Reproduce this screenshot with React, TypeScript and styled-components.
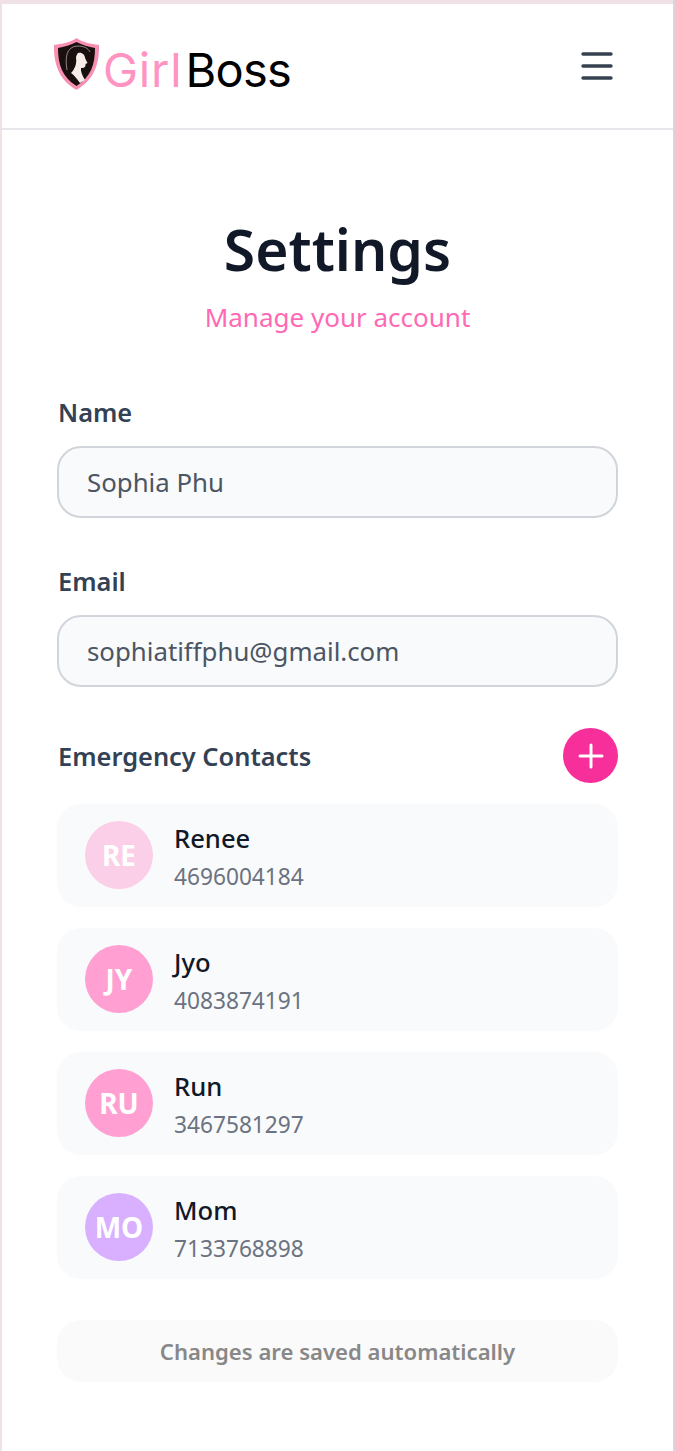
import React from "react";
import styled, { createGlobalStyle } from "styled-components";

const Global = createGlobalStyle`
  html, body { margin: 0; padding: 0; background: #f0e1e7; }
  body { font-family: "Noto Sans", "Open Sans", sans-serif; }
  * { box-sizing: border-box; }
`;

const Page = styled.div`
  width: 675px;
  height: 1451px;
  overflow: hidden;
  padding: 4px 0 0 2px;
  border-right: 2px solid #ddd4d9;
`;

const Phone = styled.div`
  background: #fff;
  height: 1447px;
`;

const Header = styled.header`
  height: 126px;
  border-bottom: 2px solid #e5e7eb;
  display: flex;
  align-items: center;
  justify-content: space-between;
  padding: 0 59px 0 52px;
`;

const Logo = styled.div`
  display: flex;
  align-items: center;
  gap: 0;
  margin-top: 2px;
`;

const ShieldMark = styled.svg`
  display: block;
  margin-bottom: 6px;
`;

const LogoText = styled.div`
  font-family: "Inter", sans-serif;
  font-size: 47px;
  line-height: 52px;
  letter-spacing: -0.7px;
  color: #000;
  margin-top: 5px;
  margin-left: 3px;
`;

const Pink = styled.span`
  color: #ff94c2;
  letter-spacing: 0.8px;
  margin-right: 3px;
`;

const Menu = styled.button`
  border: 0;
  background: none;
  padding: 0;
  width: 34px;
  height: 34px;
  color: #374151;
`;

const Main = styled.main`
  padding: 0 55px;
`;

const Title = styled.h1`
  margin: 83px 0 0;
  text-align: center;
  font-size: 57px;
  line-height: 72px;
  font-weight: 600;
  color: #111827;
`;

const Subtitle = styled.p`
  margin: 13px 0 0;
  text-align: center;
  font-size: 26px;
  line-height: 38px;
  color: #ff69b4;
`;

const Field = styled.div<{ $top: number }>`
  margin-top: ${(p) => p.$top}px;
`;

const Label = styled.label`
  display: block;
  font-size: 25.400px;
  line-height: 34px;
  font-weight: 600;
  color: #334155;
  margin-bottom: 17px;
  margin-left: 1px;
`;

const Input = styled.div`
  height: 72px;
  border: 2px solid #d1d5db;
  border-radius: 24px;
  background: #f9fafb;
  padding: 0 28px;
  display: flex;
  align-items: center;
  font-size: 25.800px;
  color: #4b5563;
`;

const ContactsHead = styled.div`
  margin-top: 41px;
  display: flex;
  align-items: center;
  justify-content: space-between;
`;

const ContactsTitle = styled.h2`
  margin: 0 0 0 1px;
  font-size: 25.400px;
  line-height: 34px;
  font-weight: 600;
  color: #334155;
`;

const AddButton = styled.button`
  width: 55px;
  height: 55px;
  border: 0;
  padding: 0;
  border-radius: 50%;
  background: #f72f9b;
  color: #fff;
  display: flex;
  align-items: center;
  justify-content: center;
`;

const List = styled.div`
  margin-top: 21px;
  display: flex;
  flex-direction: column;
  gap: 21px;
`;

const Card = styled.div`
  height: 103px;
  border-radius: 24px;
  background: #f9fafb;
  display: flex;
  align-items: center;
  gap: 21px;
  padding: 0 28px;
`;

const Avatar = styled.div<{ $bg: string }>`
  width: 68px;
  height: 68px;
  margin-bottom: 1px;
  border-radius: 50%;
  background: ${(p) => p.$bg};
  color: #fff;
  font-size: 28px;
  font-weight: 700;
  display: flex;
  align-items: center;
  justify-content: center;
`;

const Info = styled.div`
  display: flex;
  flex-direction: column;
  padding-top: 3px;
`;

const ContactName = styled.div`
  font-size: 25.600px;
  line-height: 38px;
  font-weight: 500;
  color: #111827;
`;

const ContactPhone = styled.div`
  font-size: 22.700px;
  line-height: 37px;
  color: #6b7280;
`;

const Note = styled.div`
  margin-top: 41px;
  height: 62px;
  border-radius: 24px;
  background: #fafafa;
  display: flex;
  align-items: center;
  justify-content: center;
  font-size: 22.100px;
  font-weight: 600;
  color: #888888;
`;

const contacts = [
  { i: "RE", n: "Renee", p: "4696004184", c: "#fbcfe8" },
  { i: "JY", n: "Jyo", p: "4083874191", c: "#ff9fd2" },
  { i: "RU", n: "Run", p: "3467581297", c: "#ff9fd2" },
  { i: "MO", n: "Mom", p: "7133768898", c: "#d8b0ff" },
];

const Shield = () => (
  <ShieldMark width="46" height="52" viewBox="0 0 46 52">
    <path d="M22.500 0 C17 4 8 6 0 7 C-0.500 26 5 42 22.500 52 C40 42 45.500 26 45 7 C37 6 28 4 22.500 0Z" fill="#f78fb3" />
    <path d="M22.500 4 C17 7 10 9 4 10 C4 26 8 39 22.500 48 C37 39 41 26 41 10 C35 9 28 7 22.500 4Z" fill="#1a0f0f" />
    <path d="M13 32 C11 20 12 9 23 8 C30 8 34 10 36 14" fill="none" stroke="#cbb9b9" strokeWidth="0.7" />
    <path d="M24 15 C28 14 31 17 31 20 C32 22 33 24 33.500 25 L31.500 26 C32 29 30 30.500 27 30 C26.500 33 28 37 31 42 L26 45 C23 41 20 37 17 35 C21 31 23 25 22 20 C22 18 23 16 24 15Z" fill="#f7ede8" />
  </ShieldMark>
);

export default function App() {
  return (
    <Page>
      <Global />
      <Phone>
        <Header>
          <Logo>
            <Shield />
            <LogoText>
              <Pink>Girl</Pink>Boss
            </LogoText>
          </Logo>
          <Menu aria-label="menu">
            <svg width="34" height="34" viewBox="0 0 34 34" fill="none" stroke="currentColor" strokeWidth="3.400" strokeLinecap="round">
              <path d="M3 5h28M3 17h28M3 29h28" />
            </svg>
          </Menu>
        </Header>
        <Main>
          <Title>Settings</Title>
          <Subtitle>Manage your account</Subtitle>
          <Field $top={59}>
            <Label>Name</Label>
            <Input>Sophia Phu</Input>
          </Field>
          <Field $top={46}>
            <Label>Email</Label>
            <Input>sophiatiffphu@gmail.com</Input>
          </Field>
          <ContactsHead>
            <ContactsTitle>Emergency Contacts</ContactsTitle>
            <AddButton aria-label="add">
              <svg width="28" height="28" viewBox="0 0 28 28" fill="none" stroke="currentColor" strokeWidth="3" strokeLinecap="round">
                <path d="M14 3v22M3 14h22" />
              </svg>
            </AddButton>
          </ContactsHead>
          <List>
            {contacts.map((c) => (
              <Card key={c.n}>
                <Avatar $bg={c.c}>{c.i}</Avatar>
                <Info>
                  <ContactName>{c.n}</ContactName>
                  <ContactPhone>{c.p}</ContactPhone>
                </Info>
              </Card>
            ))}
          </List>
          <Note>Changes are saved automatically</Note>
        </Main>
      </Phone>
    </Page>
  );
}
